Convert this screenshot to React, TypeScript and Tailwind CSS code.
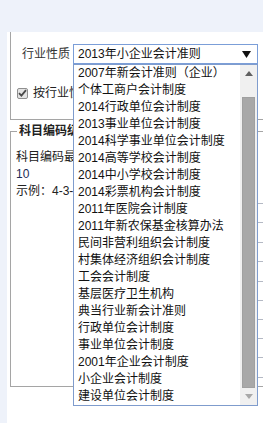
import React from "react";

const items = [
  "2007年新会计准则（企业）",
  "个体工商户会计制度",
  "2014行政单位会计制度",
  "2013事业单位会计制度",
  "2014科学事业单位会计制度",
  "2014高等学校会计制度",
  "2014中小学校会计制度",
  "2014彩票机构会计制度",
  "2011年医院会计制度",
  "2011年新农保基金核算办法",
  "民间非营利组织会计制度",
  "村集体经济组织会计制度",
  "工会会计制度",
  "基层医疗卫生机构",
  "典当行业新会计准则",
  "行政单位会计制度",
  "事业单位会计制度",
  "2001年企业会计制度",
  "小企业会计制度",
  "建设单位会计制度",
];

const gridRows = ["h-[19px]", "h-[20px]", "h-[19px]", "h-[20px]", "h-[19px]", "h-[19px]", "h-[19px]", "h-[19px]", "h-[20px]"];

export default function App() {
  return (
    <div className="relative w-[263px] h-[423px] overflow-hidden bg-[#eef2fa] text-[12px] text-[#222] font-[family-name:'Liberation_Sans','Noto_Sans_CJK_SC',sans-serif]">
      <div className="h-[32px]" />
      <div className="flex h-[391px]">
        <div className="w-[7px] shrink-0" />
        <div className="flex-1 bg-white flex flex-col overflow-visible">
          {/* Section 1 */}
          <div className="ml-[3px] w-[300px] shrink-0 h-[88px] border-l border-b border-[#a5a5a5] flex flex-col">
            <div className="pt-[12px] pl-[11px] flex items-center">
              <span className="w-[51px] leading-[20px] text-[#333]">行业性质</span>
              <div className="relative w-[185px] h-[20px] border border-[#7b9ed8] bg-white flex items-center pl-[4px]">
                <span className="flex-1 leading-[18px] text-[#111]">2013年小企业会计准则</span>
                <svg width="9" height="7" viewBox="0 0 9 7" className="mr-[6px]">
                  <polygon points="0,0 9,0 4.5,7" fill="#111" />
                </svg>
                {/* dropdown list */}
                <div className="absolute left-[-1px] top-[19px] w-[185px] h-[342px] border border-[#7f9ccd] bg-white flex z-10">
                  <div className="flex-1 flex flex-col pl-[4px]">
                    {items.map((t) => (
                      <div key={t} className="h-[17px] leading-[17px] whitespace-nowrap text-[#111]">
                        {t}
                      </div>
                    ))}
                  </div>
                  <div className="w-[17px] bg-[#f0f0f0] flex flex-col">
                    <div className="h-[17px] flex items-center justify-center">
                      <svg width="8" height="5" viewBox="0 0 8 5">
                        <polygon points="0,5 8,5 4,0" fill="#606060" />
                      </svg>
                    </div>
                    <div className="flex-1 flex flex-col">
                      <div className="mt-[15px] mx-[2px] h-[291px] bg-[#a8a8a8] border border-[#a0a0a0]" />
                    </div>
                    <div className="h-[17px] flex items-center justify-center">
                      <svg width="8" height="5" viewBox="0 0 8 5">
                        <polygon points="0,0 8,0 4,5" fill="#a8a8a8" />
                      </svg>
                    </div>
                  </div>
                </div>
              </div>
            </div>
            <div className="mt-[20px] pl-[6px] h-[18px] flex items-center gap-[5px]">
              <div className="w-[11px] h-[11px] border border-[#8f8f8f] rounded-[2px] bg-[#e4e4e4] flex items-center justify-center">
                <svg width="9" height="8" viewBox="0 0 9 8">
                  <path d="M1 4.2 L3.4 6.6 L8 1.2" stroke="#4a4a4a" strokeWidth="1.8" fill="none" />
                </svg>
              </div>
              <span className="leading-[18px] text-[#222]">按行业性质预置科目</span>
            </div>
          </div>

          {/* Section 2 */}
          <fieldset className="mt-[3px] ml-[3px] w-[300px] shrink-0 h-[264px] border border-[#a5a5a5] pl-[5px]">
            <legend className="ml-[1px] px-[2px] font-bold leading-[16px] text-[#222]">科目编码级次设置</legend>
            <div className="flex">
              <div className="w-[242px] shrink-0 pt-[10px] flex flex-col">
                <div className="leading-[17px] whitespace-nowrap">科目编码最大级次及长度</div>
                <div className="leading-[17px] text-[#1b2a55]">10</div>
                <div className="leading-[17px] whitespace-nowrap">示例：4-3-3-3-3-3-3-3-3-3</div>
              </div>
              <div className="flex-1 flex flex-col">
                <div className="h-[65px] border-b border-[#b4b9c4]" />
                {gridRows.map((h, i) => (
                  <div key={i} className={`${h} border-b border-[#b4b9c4]`} />
                ))}
              </div>
            </div>
          </fieldset>
        </div>
      </div>
    </div>
  );
}
